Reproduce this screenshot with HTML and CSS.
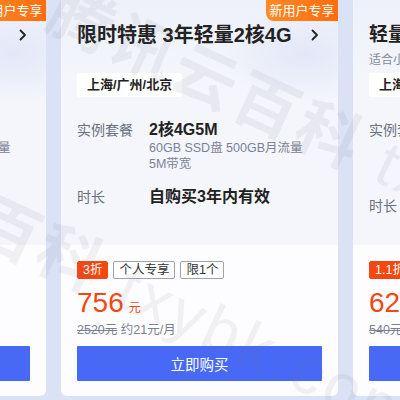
FILE: index.html
```html
<!DOCTYPE html>
<html lang="zh-CN">
<head>
<meta charset="utf-8">
<title>轻量应用服务器 限时特惠</title>
<link rel="stylesheet" href="styles.css">
</head>
<body>
<div class="stage">
  <div class="card">
    <div class="badge">新用户专享</div>
    <div class="card-head">
      <div class="title-row">
        <span class="title">限时特惠 1年轻量2核2G</span>
        <svg class="chevron" width="8" height="12" viewBox="0 0 8 12"><path d="M1.5 1.5 6 6l-4.5 4.5" fill="none" stroke="#222" stroke-width="1.8" stroke-linecap="round" stroke-linejoin="round"/></svg>
      </div>
      <div class="subtitle"></div>
      <div class="region">上海/广州/北京</div>
      <div class="row row--spec">
        <span class="label">实例套餐</span>
        <div class="value">
          <div class="value-main">2核2G4M</div>
          <div class="value-sub">50GB SSD盘 300GB月流量</div>
          <div class="value-sub">4M带宽</div>
        </div>
      </div>
      <div class="row row--time">
        <span class="label">时长</span>
        <div class="value"><div class="value-big">自购买1年内有效</div></div>
      </div>
    </div>
    <div class="card-foot">
      <div class="tags"><span class="tag tag--hot">2.8折</span><span class="tag">个人专享</span><span class="tag">限1个</span></div>
      <div class="price"><span class="price-num">68</span><span class="price-unit">元</span></div>
      <div class="old"><s>240元</s> 约5.7元/月</div>
      <button class="buy">立即购买</button>
    </div>
  </div>

  <div class="card">
    <div class="badge">新用户专享</div>
    <div class="card-head">
      <div class="title-row">
        <span class="title">限时特惠 3年轻量2核4G</span>
        <svg class="chevron" width="8" height="12" viewBox="0 0 8 12"><path d="M1.5 1.5 6 6l-4.5 4.5" fill="none" stroke="#222" stroke-width="1.8" stroke-linecap="round" stroke-linejoin="round"/></svg>
      </div>
      <div class="subtitle"></div>
      <div class="region">上海/广州/北京</div>
      <div class="row row--spec">
        <span class="label">实例套餐</span>
        <div class="value">
          <div class="value-main">2核4G5M</div>
          <div class="value-sub">60GB SSD盘 500GB月流量</div>
          <div class="value-sub">5M带宽</div>
        </div>
      </div>
      <div class="row row--time">
        <span class="label">时长</span>
        <div class="value"><div class="value-big">自购买3年内有效</div></div>
      </div>
    </div>
    <div class="card-foot">
      <div class="tags"><span class="tag tag--hot">3折</span><span class="tag">个人专享</span><span class="tag">限1个</span></div>
      <div class="price"><span class="price-num">756</span><span class="price-unit">元</span></div>
      <div class="old"><s>2520元</s> 约21元/月</div>
      <button class="buy">立即购买</button>
    </div>
  </div>

  <div class="card">
    <div class="card-head">
      <div class="title-row">
        <span class="title title--plain">轻量应用服务器</span>
      </div>
      <div class="subtitle">适合小型网站、博客</div>
      <div class="region">上海/广州/北京</div>
      <div class="row row--spec">
        <span class="label">实例套餐</span>
        <div class="value">
          <div class="value-main">2核2G3M</div>
          <div class="value-sub">40GB SSD盘 200GB月流量</div>
          <div class="value-sub">3M带宽</div>
        </div>
      </div>
      <div class="row row--time row--time-loose">
        <span class="label">时长</span>
        <div class="value"><div class="value-big">1年</div></div>
      </div>
    </div>
    <div class="card-foot">
      <div class="tags"><span class="tag tag--hot">1.1折</span><span class="tag">企业专享</span></div>
      <div class="price"><span class="price-num">62</span><span class="price-unit">元</span></div>
      <div class="old"><s>540元</s> 约5元/月</div>
      <button class="buy">立即购买</button>
    </div>
  </div>
</div>

<div class="watermark">
  <span class="wm wm--one"><b>腾讯云百科</b> txybk.com</span>
  <span class="wm wm--two"><b>百科</b> txybk.com</span>
</div>
</body>
</html>
```

FILE: styles.css
```css
* { box-sizing: border-box; }

html, body {
  margin: 0;
  height: 100%;
  overflow: hidden;
}

body {
  background: #dbe2f6;
  font-family: "Liberation Sans", "Noto Sans CJK SC", sans-serif;
  color: #222;
  position: relative;
}

.stage {
  display: flex;
  gap: 15px;
  width: max-content;
  margin-left: -231px;
}

.card {
  position: relative;
  width: 277px;
  height: 396px;
  flex: none;
  display: flex;
  flex-direction: column;
  border-radius: 0 0 6px 6px;
  overflow: hidden;
  background: #fdfdff;
}

.badge {
  position: absolute;
  top: 0;
  right: 0;
  width: 72px;
  height: 21px;
  line-height: 21px;
  text-align: center;
  font-size: 13px;
  color: #fff;
  background: linear-gradient(90deg, #ff8a26, #ff6c0c);
  border-bottom-left-radius: 8px;
}

.card-head {
  height: 245px;
  padding: 21px 16px 0;
  background:
    radial-gradient(120px 70px at 88% 22%, rgba(225, 230, 248, 0.9), rgba(225, 230, 248, 0) 70%),
    linear-gradient(180deg, #eef1fa 0%, #f4f6fb 35%, #f5f6fb 100%);
}

.title-row {
  display: flex;
  align-items: center;
  justify-content: space-between;
  height: 28px;
}

.title {
  font-size: 20px;
  font-weight: 700;
  line-height: 28px;
  white-space: nowrap;
}

.title--plain { font-size: 19px; }

.chevron {
  margin-right: 3px;
  flex: none;
}

.subtitle {
  height: 18px;
  margin-top: 2px;
  font-size: 12px;
  line-height: 18px;
  color: #858b9a;
  white-space: nowrap;
}

.region {
  display: inline-block;
  margin-top: 4px;
  height: 24px;
  padding: 0 10px;
  line-height: 24px;
  font-size: 13px;
  font-weight: 700;
  background: #fff;
  border-radius: 2px;
  white-space: nowrap;
}

.row {
  display: flex;
}

.row--spec { margin-top: 23px; }
.row--time { margin-top: 15px; }
.row--time-loose { margin-top: 24px; }

.label {
  width: 72px;
  flex: none;
  font-size: 14px;
  line-height: 20px;
  color: #6a7080;
}

.value { white-space: nowrap; }

.value-main {
  font-size: 16px;
  font-weight: 700;
  line-height: 20px;
}

.value-sub {
  font-size: 12.5px;
  line-height: 16px;
  color: #7b8296;
}

.value-sub:first-of-type { margin-top: 5px; }

.value-big {
  font-size: 16px;
  font-weight: 700;
  line-height: 20px;
}

.card-foot {
  flex: 1;
  padding: 16px 16px 15px;
  display: flex;
  flex-direction: column;
  align-items: flex-start;
}

.tags {
  display: flex;
  gap: 5px;
}

.tag {
  height: 18px;
  padding: 0 5px;
  border: 1px solid #9ea2ab;
  border-radius: 2px;
  font-size: 12.5px;
  line-height: 16px;
  color: #333;
  background: #fff;
  white-space: nowrap;
}

.tag--hot {
  border-color: #f5470f;
  background: #f5470f;
  color: #fff;
}

.price {
  margin-top: 10px;
  height: 27px;
  line-height: 27px;
  color: #f5470f;
  white-space: nowrap;
}

.price-num { font-size: 28px; }

.price-unit {
  margin-left: 5px;
  font-size: 12px;
}

.old {
  margin-top: 6px;
  font-size: 12.5px;
  line-height: 16px;
  color: #7c8190;
  white-space: nowrap;
}

.buy {
  margin-top: 8px;
  width: 100%;
  height: 35px;
  border: 0;
  border-radius: 1px;
  background: #4769f6;
  color: #fff;
  font-family: inherit;
  font-size: 14.5px;
}

/* faint site watermark laid over the cards */
.watermark {
  position: absolute;
  inset: 0;
  pointer-events: none;
  overflow: hidden;
}

.wm {
  position: absolute;
  transform-origin: 0 0;
  white-space: nowrap;
  font-size: 64px;
  line-height: 1;
  color: rgba(110, 115, 130, 0.09);
  letter-spacing: 4px;
}

.wm b { font-weight: 700; }

.wm--one {
  left: 66px;
  top: -22px;
  transform: rotate(25deg);
}

.wm--two {
  left: -8px;
  top: 188px;
  transform: rotate(25deg);
}
```
